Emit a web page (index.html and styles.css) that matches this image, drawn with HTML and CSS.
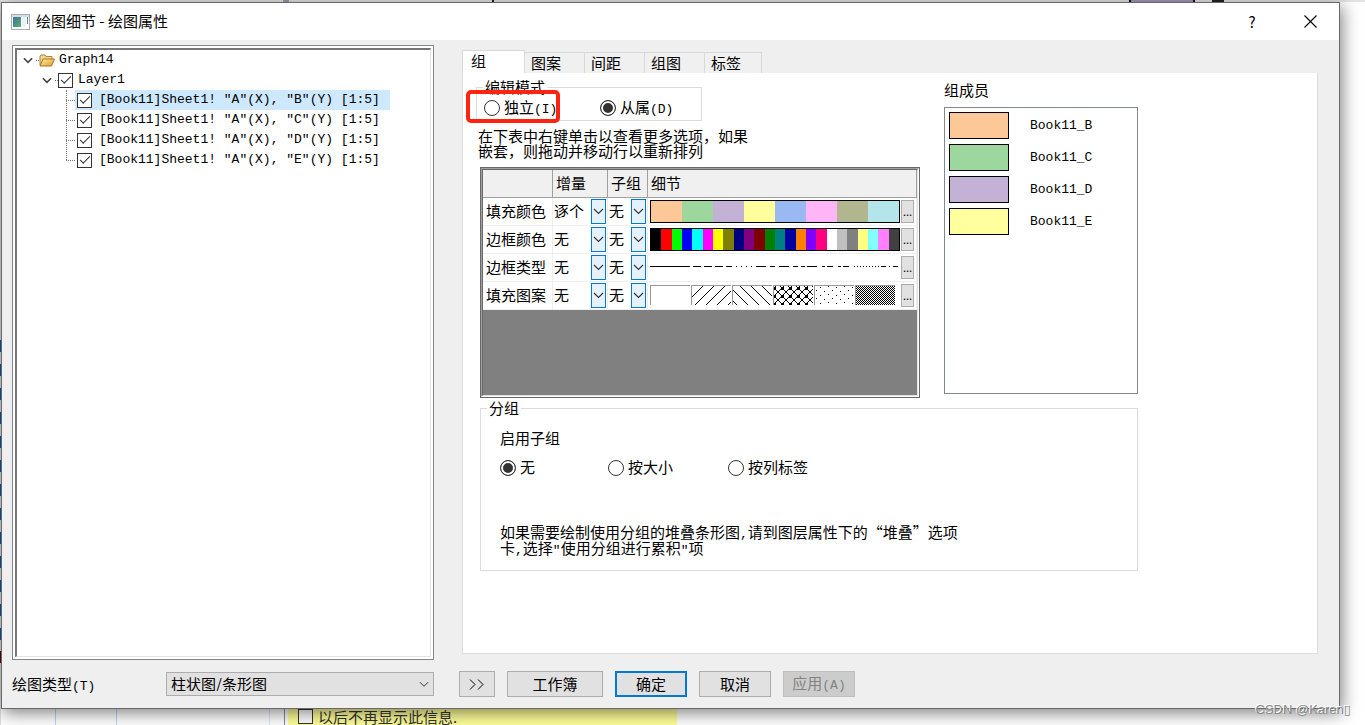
FILE: index.html
```html
<!DOCTYPE html>
<html lang="zh-CN">
<head>
<meta charset="utf-8">
<title>绘图细节 - 绘图属性</title>
<link rel="stylesheet" href="styles.css">
</head>
<body>
<svg class="defs" aria-hidden="true">
  <symbol id="chev" viewBox="0 0 11 7"><path d="M1 1l4.500 4.500L10 1" fill="none" stroke="#333" stroke-width="1.100"/></symbol>
  <symbol id="tchev" viewBox="0 0 11 7"><path d="M1 1l4.500 4.500L10 1" fill="none" stroke="#444" stroke-width="1.800"/></symbol>
</svg>
<div class="desktop">
  <span class="mark m1"></span><span class="mark m2"></span><span class="mark m3"></span><span class="mark m4"></span>
  <span class="blues"></span><span class="maroon"></span>
  <div class="cells"></div>
  <label class="notice"><input type="checkbox" class="box">以后不再显示此信息.</label>
</div>
<main class="dialog">
  <header class="titlebar">
    <svg class="appicon" viewBox="0 0 19 16"><defs><linearGradient id="ag" x2="1" y2="1"><stop stop-color="#3d6fa8"/><stop offset="1" stop-color="#56b56a"/></linearGradient></defs><rect x=".5" y=".5" width="18" height="15" fill="#fff" stroke="#a9adb3"/><rect x="1" y="1" width="17" height="2" fill="#d5dbe3"/><rect x="2" y="3" width="8" height="10" fill="url(#ag)"/><rect x="11" y="3" width="4" height="10" fill="#edf2f2"/><rect x="16" y="3" width="1" height="7" fill="#4c8b9b"/></svg>
    <h1>绘图细节 - 绘图属性</h1>
    <button class="winbtn" aria-label="帮助">?</button>
    <button class="winbtn" aria-label="关闭"><svg width="13" height="13" viewBox="0 0 13 13"><path d="M.5.5l12 12M12.500.5l-12 12" stroke="#000" stroke-width="1.100"/></svg></button>
  </header>
  <div class="content">
    <div class="treebox"><div class="tree">
      <div class="node root"><svg class="tc"><use href="#tchev"/></svg><i class="dots short"></i><svg class="folder" viewBox="0 0 16 13"><defs><linearGradient id="fg" x2="1" y2="1"><stop stop-color="#fff0a8"/><stop offset="1" stop-color="#e09a25"/></linearGradient></defs><path d="M1 11V2.500L2 1h4l1 1.500h6V5" fill="#f3d787" stroke="#a88343"/><path d="M1 12l3-7h11.500L12.500 12z" fill="url(#fg)" stroke="#a5762a"/></svg><span class="lat">Graph14</span></div>
      <div class="node layer"><svg class="tc"><use href="#tchev"/></svg><i class="dots short"></i><label><input type="checkbox" class="box" checked><span class="lat">Layer1</span></label></div>
      <ul>
        <li><i class="dots"></i><label class="sel"><input type="checkbox" class="box" checked><span class="lat">[Book11]Sheet1! "A"(X), "B"(Y) [1:5]</span></label></li>
        <li><i class="dots"></i><label><input type="checkbox" class="box" checked><span class="lat">[Book11]Sheet1! "A"(X), "C"(Y) [1:5]</span></label></li>
        <li><i class="dots"></i><label><input type="checkbox" class="box" checked><span class="lat">[Book11]Sheet1! "A"(X), "D"(Y) [1:5]</span></label></li>
        <li><i class="dots"></i><label><input type="checkbox" class="box" checked><span class="lat">[Book11]Sheet1! "A"(X), "E"(Y) [1:5]</span></label></li>
      </ul>
    </div></div>
    <section class="side">
      <nav class="tabs"><button class="tab active">组</button><button class="tab">图案</button><button class="tab">间距</button><button class="tab">组图</button><button class="tab">标签</button></nav>
      <div class="panel">
        <div class="upper">
          <div class="editcol">
            <fieldset class="mode"><legend>编辑模式</legend>
              <div class="radios">
                <label class="marked"><input type="radio" name="mode"><span>独立<span class="lat">(I)</span></span></label>
                <label><input type="radio" name="mode" checked><span>从属<span class="lat">(D)</span></span></label>
              </div>
            </fieldset>
            <p class="hint">在下表中右键单击以查看更多选项，如果<br>嵌套，则拖动并移动行以重新排列</p>
            <div class="frame"><div class="frame2"><div class="frame3">
              <table>
                <colgroup><col class="c1"><col class="c2"><col class="c3"><col></colgroup>
                <thead><tr><th></th><th>增量</th><th>子组</th><th>细节</th></tr></thead>
                <tbody>
                  <tr><td>填充颜色</td>
                    <td><div class="drop"><select aria-label="填充颜色增量"><option>逐个</option></select><span><svg><use href="#chev"/></svg></span></div></td>
                    <td><div class="drop"><select aria-label="填充颜色子组"><option>无</option></select><span><svg><use href="#chev"/></svg></span></div></td>
                    <td><div class="detail"><div class="strip"><i style="background:#fdc897"></i><i style="background:#9ed79e"></i><i style="background:#c3b1d6"></i><i style="background:#ffff9e"></i><i style="background:#9ab9f3"></i><i style="background:#ffb5f7"></i><i style="background:#b1b68f"></i><i style="background:#b4e5ea"></i></div><button class="more">...</button></div></td></tr>
                  <tr><td>边框颜色</td>
                    <td><div class="drop"><select aria-label="边框颜色增量"><option>无</option></select><span><svg><use href="#chev"/></svg></span></div></td>
                    <td><div class="drop"><select aria-label="边框颜色子组"><option>无</option></select><span><svg><use href="#chev"/></svg></span></div></td>
                    <td><div class="detail"><div class="strip"><i style="background:#000"></i><i style="background:#f00"></i><i style="background:#0f0"></i><i style="background:#00f"></i><i style="background:#0ff"></i><i style="background:#f0f"></i><i style="background:#ff0"></i><i style="background:#808000"></i><i style="background:#000080"></i><i style="background:#800080"></i><i style="background:#800000"></i><i style="background:#008000"></i><i style="background:#008080"></i><i style="background:#0000a0"></i><i style="background:#ff8000"></i><i style="background:#8000ff"></i><i style="background:#ff0080"></i><i style="background:#fff"></i><i style="background:#c0c0c0"></i><i style="background:#808080"></i><i style="background:#ffff80"></i><i style="background:#80ffff"></i><i style="background:#ff80ff"></i><i style="background:#404040"></i></div><button class="more">...</button></div></td></tr>
                  <tr><td>边框类型</td>
                    <td><div class="drop"><select aria-label="边框类型增量"><option>无</option></select><span><svg><use href="#chev"/></svg></span></div></td>
                    <td><div class="drop"><select aria-label="边框类型子组"><option>无</option></select><span><svg><use href="#chev"/></svg></span></div></td>
                    <td><div class="detail"><svg class="art" viewBox="0 0 250 23" shape-rendering="crispEdges"><g stroke="#000" fill="none"><path d="M0 10.500h40"/><path d="M43 10.500h38" stroke-dasharray="8 3"/><path d="M81 10.500h26" stroke-dasharray="1 4"/><path d="M106 10.500h45" stroke-dasharray="10 4 5 4"/><path d="M151 10.500h10" stroke-dasharray="4 2"/><path d="M161 10.500h43" stroke-dasharray="6 5 3 2"/><path d="M204 10.500h30" stroke-dasharray="1 2"/><path d="M231 10.500h19" stroke-dasharray="5 3 1 3"/></g></svg><button class="more">...</button></div></td></tr>
                  <tr><td>填充图案</td>
                    <td><div class="drop"><select aria-label="填充图案增量"><option>无</option></select><span><svg><use href="#chev"/></svg></span></div></td>
                    <td><div class="drop"><select aria-label="填充图案子组"><option>无</option></select><span><svg><use href="#chev"/></svg></span></div></td>
                    <td><div class="detail"><svg class="art" viewBox="0 0 250 23" shape-rendering="crispEdges">
                      <defs>
                        <pattern id="p1" width="11" height="11" patternUnits="userSpaceOnUse"><path d="M-2 13L13-2M-2 2L2-2M9 13l4-4" stroke="#000" stroke-width="1.300"/></pattern>
                        <pattern id="p2" width="11" height="11" patternUnits="userSpaceOnUse"><path d="M-2-2l15 15M9-2l4 4M-2 9l4 4" stroke="#000" stroke-width="1.200"/></pattern>
                        <pattern id="p3" width="8" height="8" patternUnits="userSpaceOnUse"><path d="M-1-1l10 10M9-1L-1 9" stroke="#000" stroke-width="1.300"/><path d="M3 3h3v3H3zM0 0h1v1H0z"/></pattern>
                        <pattern id="p4" width="16" height="8" patternUnits="userSpaceOnUse"><path d="M2 2h1v1H2zM10 3h1v1h-1zM6 6h1v1H6zM14 7h1v1h-1z"/></pattern>
                        <pattern id="p5" width="4" height="4" patternUnits="userSpaceOnUse"><path d="M0 0h1v1H0zM2 0h1v1H2zM1 1h1v1H1zM3 1h1v1H3zM0 2h1v1H0zM2 2h1v1H2zM1 3h1v1H1zM3 3h1v1H3z"/></pattern>
                      </defs>
                      <path d="M41 2h40v19H41z" fill="url(#p1)"/><path d="M82 2h40v19H82z" fill="url(#p2)"/><path d="M123 2h40v19h-40z" fill="url(#p3)"/><path d="M164 2h40v19h-40z" fill="url(#p4)"/><path d="M205 2h40v19h-40z" fill="url(#p5)"/>
                      <path d="M.5 21V1.500H40M41.500 21V1.500H81M82.500 21V1.500h39.500M123.500 21V1.500H163M164.500 21V1.500H204M205.500 21V1.500H245" stroke="#999" fill="none"/></svg><button class="more">...</button></div></td></tr>
                </tbody>
              </table>
            </div></div></div>
          </div>
          <div class="memcol">
            <h2>组成员</h2>
            <ul class="members">
              <li><i style="background:#fdc897"></i><span class="lat">Book11_B</span></li>
              <li><i style="background:#9ed79e"></i><span class="lat">Book11_C</span></li>
              <li><i style="background:#c3b1d6"></i><span class="lat">Book11_D</span></li>
              <li><i style="background:#ffff9e"></i><span class="lat">Book11_E</span></li>
            </ul>
          </div>
        </div>
        <fieldset class="group"><legend>分组</legend>
          <h2>启用子组</h2>
          <div class="radios">
            <label><input type="radio" name="sub" checked><span>无</span></label>
            <label><input type="radio" name="sub"><span>按大小</span></label>
            <label><input type="radio" name="sub"><span>按列标签</span></label>
          </div>
          <p>如果需要绘制使用分组的堆叠条形图<span class="lat">,</span>请到图层属性下的“堆叠”选项<br>卡<span class="lat">,</span>选择<span class="lat">"</span>使用分组进行累积<span class="lat">"</span>项</p>
        </fieldset>
      </div>
    </section>
  </div>
  <footer class="footer">
    <div class="plot"><label for="ptype">绘图类型<span class="lat">(T)</span></label>
      <div class="combo"><select id="ptype"><option>柱状图/条形图</option></select><svg><use href="#chev"/></svg></div></div>
    <div class="buttons">
      <button class="btn small" aria-label="展开"><svg width="16" height="11" viewBox="0 0 16 11"><path d="M1 .5l5 5-5 5M9 .5l5 5-5 5" fill="none" stroke="#000"/></svg></button>
      <button class="btn wide">工作簿</button><button class="btn primary">确定</button><button class="btn">取消</button><button class="btn" disabled><span>应用<span class="lat">(A)</span></span></button>
    </div>
  </footer>
</main>
<div class="watermark">CSDN @Karen▯</div>
</body>
</html>
```
FILE: styles.css
```css
*, *::before, *::after { box-sizing: border-box; }
body {
  margin: 0; min-height: 100vh; display: flex; padding: 2px 25px 16px 1px;
  position: relative; overflow: hidden; background: #fff; color: #000;
  font: 15px/15px "Noto Sans CJK SC", sans-serif;
}
button, select, input { font: inherit; color: inherit; margin: 0; }
h1, h2, p, ul, fieldset { margin: 0; padding: 0; font-size: 15px; font-weight: 400; }
ul { list-style: none; }
.defs { position: absolute; width: 0; height: 0; }
.lat { font-family: "Liberation Mono", monospace; font-size: 13px; line-height: 10px; white-space: pre; }

/* Windows behind the dialog */
.desktop { position: absolute; inset: 0; border-top: 2px solid #e3e3e3; border-left: 1px solid #ddd; }
.mark { position: absolute; top: -2px; height: 2px; width: 2px; background: #222; }
.m1 { left: 282px; width: 6px; background: #99a; }
.m2 { left: 491px; }
.m3 { left: 1128px; width: 66px; background: #a795bd; border: solid #111; border-width: 0 2px; }
.m4 { left: 1211px; width: 12px; }
.blues { position: absolute; left: -1px; top: 338px; width: 1px; height: 300px; background: repeating-linear-gradient(#0759b0 0 12px, #ddd 12px 24px); }
.maroon { position: absolute; left: -1px; top: 649px; width: 1px; height: 12px; background: #600; }
.cells {
  position: absolute; left: 0; bottom: 0; width: 284px; height: 16px; border-right: 1px solid #889;
  background: linear-gradient(#b9d7f3, #b9d7f3) 54px 0 / 1px 16px no-repeat, linear-gradient(#b9d7f3, #b9d7f3) 115px 0 / 1px 16px no-repeat, linear-gradient(#d9e7f5, #d9e7f5) 268px 0 / 1px 16px no-repeat;
}
.notice {
  position: absolute; left: 287px; bottom: 0; width: 389px; height: 16px;
  display: flex; align-items: center; gap: 5px; padding: 0 0 1px 10px; background: #ffff99; color: #333;
}

.dialog {
  position: relative; flex: 1; min-width: 0; display: flex; flex-direction: column;
  background: #efefef; border: 1px solid #696969; box-shadow: 2px 4px 16px rgba(0,0,0,.5);
}
.titlebar { display: flex; align-items: center; height: 37px; padding-left: 9px; background: #fff; }
.appicon { width: 19px; height: 16px; margin-right: 6px; }
.titlebar h1 { flex: 1; padding-bottom: 2px; }
.winbtn { width: 58px; height: 36px; padding: 0; border: 0; background: none; display: flex; align-items: center; justify-content: center; }

.content { flex: 1; display: grid; grid-template-columns: 422px minmax(0, 1fr); gap: 28px; padding: 5px 21px 0 10px; }
.treebox { border: 1px solid #828790; background: #fff; padding: 2px; }
.tree { height: 100%; border: 1px solid #e3e3e3; border-top: 2px solid #777; border-left: 2px solid #777; padding: 0 0 0 6px; }
.node, .tree li, .tree label { display: flex; align-items: center; height: 20px; }
.tc { width: 10px; height: 7px; margin-right: 3px; }
.layer { padding-left: 19px; }
.dots { width: 9px; border-top: 1px dotted #777; }
.dots.short { width: 3px; }
.folder { width: 16px; height: 13px; margin-right: 4px; }
.tree label { gap: 5px; padding-right: 10px; }
.tree ul { position: relative; padding-left: 43px; }
.tree ul::before { content: ""; position: absolute; left: 43px; top: 0; bottom: 10px; border-left: 1px dotted #777; }
.tree li label { padding-left: 2px; gap: 7px; }
.sel { background: #cde8ff; }
.box { appearance: none; flex: none; width: 15px; height: 15px; border: 1px solid #333; background: #fff; display: grid; place-items: center; }
.box:checked::after { content: ""; width: 10px; height: 5px; border: solid #333; border-width: 0 0 1px 1px; transform: rotate(-45deg); margin-bottom: 3px; }

.side { display: flex; flex-direction: column; padding: 5px 0 6px; }
.tabs { display: flex; align-items: flex-end; }
.tab { height: 21px; padding: 0 23px 1px 6px; border: 1px solid #d9d9d9; border-width: 1px 1px 0 0; background: #f0f0f0; }
.tab.active { height: 23px; padding: 0 38px 3px 8px; border-left-width: 1px; background: #fff; }
.tab:last-child { padding-right: 20px; }
.panel { flex: 1; background: #fff; border: 1px solid #dcdcdc; border-top: 0; padding: 7px 0 0 13px; }
.upper { display: grid; grid-template-columns: 444px 194px; gap: 24px; }
fieldset { border: 1px solid #dcdcdc; min-width: 0; }
legend { height: 15px; line-height: 13px; margin-left: 6px; padding: 0 2px; }
.mode { width: 226px; }
.radios { display: flex; }
.radios label { display: flex; align-items: center; gap: 4px; height: 25px; }
.mode .radios { padding-left: 7px; }
.mode label { width: 116px; }
.mode label + label { width: auto; }
input[type="radio"] { appearance: none; width: 16px; height: 16px; flex: none; border: 1px solid #333; border-radius: 50%; background: #fff; }
input[type="radio"]:checked { background: #333; box-shadow: inset 0 0 0 2px #fff; }
.marked { position: relative; }
.marked::after { content: ""; position: absolute; left: -18px; top: -5px; width: 94px; height: 33px; border: 4px solid #ff2412; border-radius: 5px; pointer-events: none; }
.hint { margin: 7px 0 9px; padding-left: 2px; }

.frame { margin-left: 4px; border: 1px solid #696969; }
.frame2 { border: 1px solid #a0a0a0; border-right-color: #fff; border-bottom-color: #fff; }
.frame3 { min-height: 227px; border: 1px solid #696969; border-right-color: #e3e3e3; border-bottom-color: #e3e3e3; background: #808080; }
table { width: 100%; table-layout: fixed; border-collapse: separate; border-spacing: 0; background: #fff; }
.c1 { width: 70px; }
.c2 { width: 55px; }
.c3 { width: 40px; }
th { height: 28px; padding: 0 0 2px 3px; font-weight: 400; text-align: left; background: #f0f0f0; border: solid #a0a0a0; border-width: 0 1px 1px 0; }
td { height: 28px; padding: 0 0 2px 3px; border: solid #eee; border-width: 0 1px 1px 0; }
td + td { padding: 0 1px; }
.drop { display: grid; grid-template-columns: 1fr 15px; height: 25px; }
.drop select { grid-area: 1 / 1 / 2 / 3; appearance: none; border: 0; background: none; padding: 0 0 2px; width: 100%; height: 25px; }
.drop span { grid-area: 1 / 2; display: grid; place-items: center; border: 1px solid #0078d7; background: #e5f1fb; pointer-events: none; }
.drop svg { width: 11px; height: 7px; }
.detail { display: flex; align-items: center; gap: 1px; padding: 0 1px; }
.strip { flex: 1; display: flex; height: 23px; border: 1px solid #000; }
.strip i { flex: 1; }
.art { flex: 1; min-width: 0; height: 23px; }
.more { width: 13px; height: 23px; padding: 0; border: 1px solid #adadad; background: #e1e1e1; font-size: 11px; }

.memcol { display: flex; flex-direction: column; padding-bottom: 4px; }
.memcol h2 { line-height: 19px; margin-bottom: 8px; }
.members { flex: 1; border: 1px solid #828790; padding: 4px; }
.members li { display: flex; align-items: center; gap: 21px; height: 27px; margin-bottom: 5px; }
.members i { width: 60px; height: 27px; border: 1px solid #000; }
.group { width: 658px; margin: 3px 0 0 4px; height: 170px; }
.group h2, .group .radios, .group p { margin-left: 19px; }
.group h2 { margin-top: 14px; }
.group .radios { margin-top: 10px; }
.radios label > span { padding-bottom: 2px; }
.group label { width: 120px; }
.group label:first-child { width: 108px; }
.group p { margin-top: 44px; }

.footer { display: flex; align-items: center; gap: 25px; padding: 11px 21px 11px 10px; }
.plot { width: 422px; display: flex; align-items: center; justify-content: space-between; }
.combo { display: grid; grid-template-columns: 1fr 15px; align-items: center; width: 268px; }
.combo select { grid-area: 1 / 1 / 2 / 3; appearance: none; height: 24px; padding: 0 4px 2px; border: 1px solid #adadad; border-radius: 0; background: #e1e1e1; }
.combo svg { grid-area: 1 / 2; width: 10px; height: 7px; pointer-events: none; }
.buttons { display: flex; gap: 12px; }
.btn { width: 72px; height: 26px; padding: 0 0 2px; border: 1px solid #adadad; background: #e1e1e1; display: flex; align-items: center; justify-content: center; }
.small { width: 36px; padding: 0; }
.wide { width: 96px; }
.primary { border: 2px solid #0078d7; }
.btn:disabled { background: #ccc; border-color: #bfbfbf; color: #838383; }
.watermark { position: absolute; right: 14px; bottom: 7px; font: 13px/16px "Liberation Sans", "DejaVu Sans", sans-serif; color: #888; text-shadow: -1px -1px 0 #fff; }
```
